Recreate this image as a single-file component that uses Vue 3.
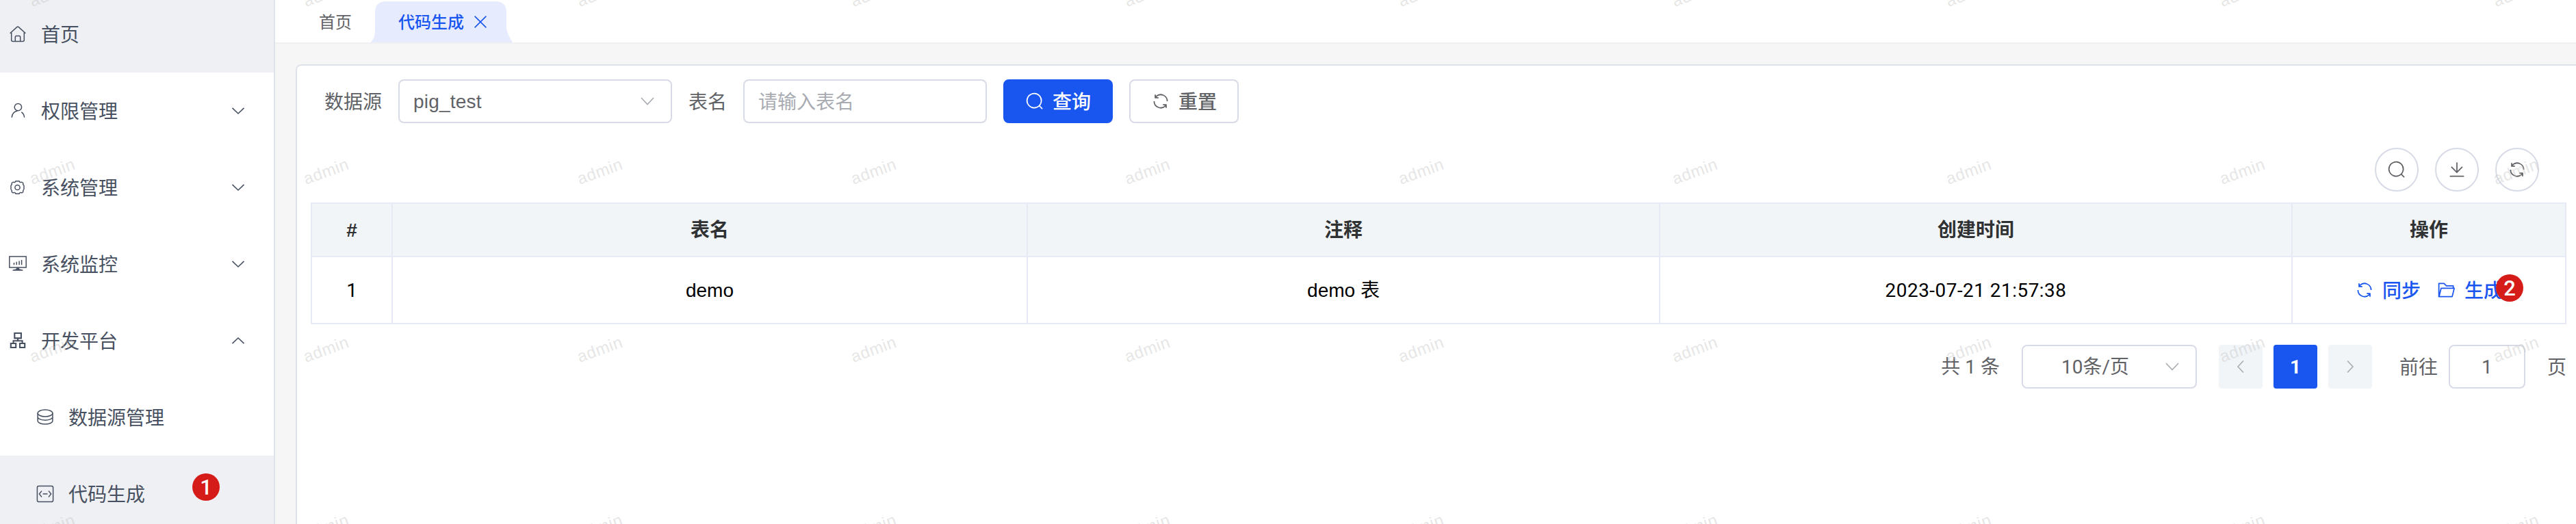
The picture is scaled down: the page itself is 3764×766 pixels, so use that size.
<script setup>
const menus = [
  { icon: 'home', label: '首页', active: true },
  { icon: 'user', label: '权限管理', arrow: 'down' },
  { icon: 'gear', label: '系统管理', arrow: 'down' },
  { icon: 'monitor', label: '系统监控', arrow: 'down' },
  { icon: 'tree', label: '开发平台', arrow: 'up' },
  { icon: 'db', label: '数据源管理', sub: true },
  { icon: 'code', label: '代码生成', sub: true, active: true, badge: '1' },
]
const marks = []
for (let r = 0; r < 4; r++) for (let c = 0; c < 10; c++) marks.push({ x: 47 + c * 400, y: 10 + r * 260 })
const paths = {
  search: 'm795.904 750.72 124.992 124.928a32 32 0 0 1-45.248 45.248L750.656 795.904a416 416 0 1 1 45.248-45.184zM480 832a352 352 0 1 0 0-704 352 352 0 0 0 0 704z',
  refresh: 'M771.776 794.88A384 384 0 0 1 128 512h64a320 320 0 0 0 555.712 216.448H654.72a32 32 0 1 1 0-64h149.056a32 32 0 0 1 32 32v148.928a32 32 0 1 1-64 0v-50.56zM276.288 295.616h92.992a32 32 0 0 1 0 64H220.16a32 32 0 0 1-32-32V178.56a32 32 0 0 1 64 0v50.56A384 384 0 0 1 896.128 512h-64a320 320 0 0 0-555.776-216.384z',
  download: 'M160 832h704a32 32 0 1 1 0 64H160a32 32 0 1 1 0-64zm384-253.696 236.288-236.352 45.248 45.248L508.8 704 192 387.2l45.248-45.248L480 584.704V128h64v450.304z',
  folder: 'M878.08 448H241.92l-96 384h636.16l96-384zM832 384v-64H485.76L357.504 192H128v448l57.92-231.744A32 32 0 0 1 216.96 384H832zm-24.96 512H96a32 32 0 0 1-32-32V160a32 32 0 0 1 32-32h287.872l128.384 128H864a32 32 0 0 1 32 32v96h23.04a32 32 0 0 1 31.04 39.744l-112 448A32 32 0 0 1 807.04 896z',
}
const tools = ['search', 'download', 'refresh']
</script>

<template>
  <div class="page">
    <aside class="side">
      <div v-for="m in menus" :key="m.label" class="item" :class="{ active: m.active, sub: m.sub }">
        <svg class="mi" viewBox="0 0 28 28">
          <g v-if="m.icon === 'home'">
            <path d="M2.6 12.8 12.7 3.6Q14 2.4 15.3 3.6L25.4 12.8" />
            <path d="M4.7 11.4V22.4Q4.7 24.4 6.7 24.4H21.3Q23.3 24.4 23.3 22.4V11.4" />
            <path d="M10.3 24V18.4Q10.3 16.6 12.1 16.6H15.9Q17.7 16.6 17.7 18.4V24" />
          </g>
          <g v-else-if="m.icon === 'user'">
            <circle cx="14.4" cy="8.6" r="5.2" />
            <path d="M5.2 23.8C5.5 18.5 9 14.5 13.6 14M19.3 15.8C22 17.6 23.4 20.4 23.6 23.8" />
          </g>
          <g v-else-if="m.icon === 'gear'">
            <circle cx="13.5" cy="14" r="3.6" />
            <path d="M11 4.7H16Q16.9 7.4 19.7 6.2Q20.3 5.9 21.7 7.6Q21.3 9.9 22.8 11Q23.4 11.6 22.9 14Q23.4 16.4 22.8 17Q21.3 18.1 21.7 20.4Q20.3 22.1 19.7 21.8Q16.9 20.6 16 23.3H11Q10.1 20.6 7.3 21.8Q6.7 22.1 5.3 20.4Q5.7 18.1 4.2 17Q3.6 16.4 4.1 14Q3.6 11.6 4.2 11Q5.7 9.9 5.3 7.6Q6.7 5.9 7.3 6.2Q10.1 7.4 11 4.7Z" />
          </g>
          <g v-else-if="m.icon === 'monitor'">
            <path d="M1.8 3H26.2V19H1.8Z" />
            <path d="M8.5 15.3V12M12.3 15.3V10.8M16.1 15.3V9.6M19.6 15.3V8" />
            <path class="solid" d="M11.8 19.5H16.2V21.2L21.5 22.6V23.8H6.5V22.6L11.8 21.2Z" />
          </g>
          <g v-else-if="m.icon === 'tree'" class="thick">
            <path d="M9.3 3H18.9V10.4H9.3ZM3.8 18H11.2V24H3.8ZM17 18H24.2V24H17ZM14.1 10.4V14.2M7.5 18V14.2H20.6V18" />
          </g>
          <g v-else-if="m.icon === 'db'">
            <ellipse cx="14" cy="8" rx="10.9" ry="5" />
            <path d="M3.1 8V13.2C3.1 19.8 24.9 19.8 24.9 13.2V8M3.1 13.6V19C3.1 25.6 24.9 25.6 24.9 19V13.6" />
          </g>
          <g v-else>
            <rect x="2.4" y="2.4" width="23.2" height="23.2" rx="2.4" />
            <path d="M9 9.6 5.4 14 9 18.6M19 9.6 22.6 14 19 18.6M10.6 14H17.4" />
          </g>
        </svg>
        <span class="zh">{{ m.label }}</span>
        <svg v-if="m.arrow" class="chev" :class="m.arrow" viewBox="0 0 20 12"><path d="M1.5 1.8 10 10 18.5 1.8" /></svg>
        <span v-if="m.badge" class="badge b1">{{ m.badge }}</span>
      </div>
    </aside>

    <main class="main">
      <nav class="tabs">
        <span class="tab">首页</span>
        <div class="tab-on">
          <svg class="tabbg" viewBox="0 0 208 60"><path d="M0 60Q6 52 6 44V16Q6 0 22 0H182Q198 0 198 16V40Q200 49 207 60Z" /></svg>
          <span class="tab-text">代码生成</span>
          <svg class="close" viewBox="0 0 20 20"><path d="M1.6 1.6 18.4 18.4M18.4 1.6 1.6 18.4" /></svg>
        </div>
      </nav>

      <section class="card">
        <div class="form">
          <label class="l1 zh">数据源</label>
          <div class="box select"><span class="mix">pig_test</span><svg class="chev" viewBox="0 0 20 12"><path d="M1 1 10 10.5 19 1" /></svg></div>
          <label class="l2 zh">表名</label>
          <div class="box input"><span class="zh">请输入表名</span></div>
          <button class="btn primary"><svg class="ic" viewBox="0 0 1024 1024"><path :d="paths.search" /></svg><span class="zh">查询</span></button>
          <button class="btn"><svg class="ic" viewBox="0 0 1024 1024"><path :d="paths.refresh" /></svg><span class="zh">重置</span></button>
        </div>

        <div class="tools">
          <button v-for="t in tools" :key="t" class="round"><svg class="ic" viewBox="0 0 1024 1024"><path :d="paths[t]" /></svg></button>
        </div>

        <div class="table">
          <div class="row head">
            <div>#</div><div>表名</div><div>注释</div><div>创建时间</div><div>操作</div>
          </div>
          <div class="row">
            <div class="num">1</div><div>demo</div><div>demo 表</div><div class="num time">2023-07-21 21:57:38</div>
            <div class="ops">
              <a><svg class="ic" viewBox="0 0 1024 1024"><path :d="paths.refresh" /></svg><span class="zh">同步</span></a>
              <a><svg class="ic" viewBox="0 0 1024 1024"><path :d="paths.folder" /></svg><span class="zh">生成</span></a>
              <span class="badge b2">2</span>
            </div>
          </div>
        </div>

        <div class="pager">
          <span class="total mix num">共 1 条</span>
          <div class="box size"><span class="mix num">10条/页</span><svg class="chev" viewBox="0 0 20 12"><path d="M1 1 10 10.5 19 1" /></svg></div>
          <button class="pg"><svg viewBox="0 0 12 20"><path d="M10 1.5 2 10 10 18.5" /></svg></button>
          <button class="pg on num"><span class="mix">1</span></button>
          <button class="pg"><svg viewBox="0 0 12 20"><path d="M2 1.5 10 10 2 18.5" /></svg></button>
          <span class="goto zh">前往</span>
          <div class="box jump num"><span class="mix">1</span></div>
          <span class="unit zh">页</span>
        </div>
      </section>
    </main>

    <svg class="marks" width="3764" height="766">
      <text v-for="(k, i) in marks" :key="i" :transform="`translate(${k.x} ${k.y}) rotate(-20)`">admin</text>
    </svg>
  </div>
</template>

<style>
body { overflow: hidden; }
</style>

<style scoped>
* { box-sizing: border-box; }
.page {
  position: relative; display: flex; width: 3764px; height: 766px; overflow: hidden;
  font-family: "Liberation Sans", "Noto Sans CJK SC", sans-serif; font-size: 28px; line-height: 40px;
  color: #606266; background: #f6f6f6;
}
button { font: inherit; margin: 0; padding: 0; }
.zh { padding-top: 4px; }
.mix { padding-top: 2px; }
.num { font-family: Roboto, "Noto Sans CJK SC", sans-serif; }
.side { width: 402px; flex: none; height: 766px; overflow: hidden; background: #fff; border-right: 2px solid #e1e3ec; }
.item { position: relative; display: flex; align-items: center; height: 112px; padding-left: 12px; color: #475060; }
.item:first-child { height: 106px; padding-bottom: 6px; }
.item.sub { padding-left: 52px; }
.item.active { background: #eff0f3; }
.mi { width: 28px; height: 28px; margin-right: 20px; fill: none; stroke: #475060; stroke-width: 1.5; }
.mi .thick { stroke-width: 2.1; }
.mi .solid { fill: #475060; stroke: none; }
.item .chev { width: 20px; height: 12px; margin-left: auto; margin-right: 42px; stroke: #475060; stroke-width: 1.6; }
.chev { fill: none; }
.chev.up { transform: rotate(180deg); }
.badge {
  position: absolute; width: 40px; height: 40px; border-radius: 50%; background: #d51c18; color: #fff;
  font: 500 31px/41px Roboto, "Liberation Sans", sans-serif; text-align: center;
}
.b1 { left: 281px; top: 26px; }
.b2 { left: 297px; top: 25px; }
.main { flex: 1; min-width: 0; }
.tabs { display: flex; height: 64px; background: #fff; border-bottom: 2px solid #eff0f1; font-size: 24px; padding-left: 64px; }
.tab { line-height: 66px; width: 76px; }
.tab-on { position: relative; display: flex; align-items: center; width: 208px; height: 62px; padding: 2px 0 0 40px; color: #1956f0; font-weight: 500; }
.tabbg { position: absolute; left: 0; top: 2px; width: 208px; height: 60px; fill: #e7ebfe; }
.tab-text { position: relative; padding-top: 2px; }
.close { position: relative; width: 20px; height: 20px; margin-left: 14px; fill: none; stroke: #1956f0; stroke-width: 1.6; }
.card {
  width: 3400px; height: 760px; margin: 30px 0 0 30px; padding: 20px; background: #fff;
  border: 2px solid #dfe2e8; border-radius: 8px;
}
.form { display: flex; align-items: center; height: 64px; padding-left: 20px; }
.l1 { width: 108px; }
.l2 { width: 80px; margin-left: 24px; }
.box { height: 64px; border: 2px solid #d8dbe6; border-radius: 8px; background: #fff; display: flex; align-items: center; padding: 0 20px; }
.box .chev { width: 20px; height: 12px; stroke: #a8abb2; stroke-width: 1.6; }
.select { width: 400px; justify-content: space-between; padding-right: 24px; letter-spacing: 0.2px; }
.input { width: 356px; color: #a8abb2; }
.btn {
  width: 160px; height: 64px; margin-left: 24px; border: 2px solid #d8dbe6; border-radius: 8px; background: #fff;
  display: flex; align-items: center; justify-content: center; gap: 12px; color: #606266; font-weight: 500;
}
.primary { background: #1956f0; border-color: #1956f0; color: #fff; }
.ic { width: 28px; height: 28px; fill: currentColor; }
.tools { display: flex; justify-content: flex-end; gap: 24px; width: 3256px; margin-top: 36px; }
.round { width: 64px; height: 64px; border-radius: 50%; border: 2px solid #d8dbe6; background: #fff; color: #606266; display: flex; align-items: center; justify-content: center; }
.table { width: 3296px; margin-top: 16px; border: 2px solid #e7eaf4; border-right: 0; border-bottom: 0; color: #000; }
.row { display: grid; grid-template-columns: 118px 928px 924px 924px 400px; height: 98px; }
.row > div { display: flex; align-items: center; justify-content: center; padding-top: 2px; border-right: 2px solid #e7eaf4; border-bottom: 2px solid #e7eaf4; }
.time { letter-spacing: 0.45px; }
.head { height: 78px; color: #303133; font-weight: 700; background: #f2f5f8; }
.row > .ops { position: relative; gap: 24px; padding-top: 0; color: #1956f0; font-weight: 500; }
.ops a { display: flex; align-items: center; gap: 12px; }
.pager { display: flex; align-items: center; height: 64px; width: 3296px; margin-top: 30px; justify-content: flex-end; }
.total { margin-right: 32px; }
.size { width: 256px; padding: 0 24px 0 56px; justify-content: space-between; margin-right: 16px; }
.pg { width: 64px; height: 64px; margin-left: 16px; border: 0; border-radius: 4px; background: #f2f5f8; display: flex; align-items: center; justify-content: center; }
.pg svg { width: 12px; height: 20px; fill: none; stroke: #a8abb2; stroke-width: 1.6; }
.pg.on { background: #1956f0; color: #fff; font-weight: 700; }
.goto { margin: 0 16px 0 40px; }
.jump { width: 112px; justify-content: center; }
.unit { margin-left: 32px; }
.marks { position: absolute; left: 0; top: 0; pointer-events: none; }
.marks text { font-size: 24px; letter-spacing: 0.7px; fill: rgba(190, 190, 190, 0.4); }
</style>
